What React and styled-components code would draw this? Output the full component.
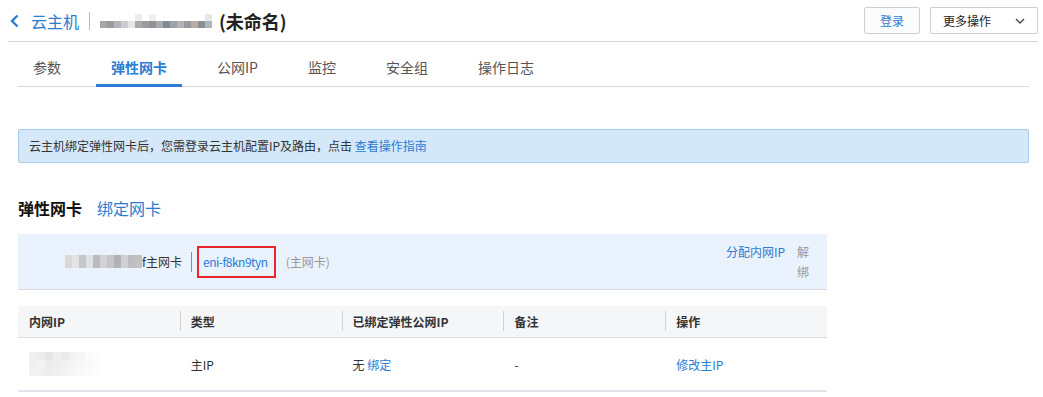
import React from 'react';
import styled, { createGlobalStyle } from 'styled-components';

const Blue = '#2b7cd3';
const Text = '#333333';

const GlobalStyle = createGlobalStyle`
  html, body {
    margin: 0;
    padding: 0;
    background: #ffffff;
  }
  body {
    font-family: 'Noto Sans CJK SC', 'Noto Sans', sans-serif;
    color: ${Text};
  }
`

const Page = styled.div`
  padding: 0 5px 0 8px;
  width: 1030px;
`

const TopBar = styled.header`
  height: 41px;
  display: flex;
  align-items: center;
  justify-content: space-between;
  border-bottom: 1px solid #d4d4d4;
`

const Crumbs = styled.div`
  display: flex;
  align-items: center;
`

const BackLink = styled.a`
  display: flex;
  align-items: center;
  gap: 12px;
  color: ${Blue};
  font-size: 16px;
  padding-left: 2px;
`

const VDivider = styled.span`
  width: 1px;
  height: ${p => p.$h || 18}px;
  background: ${p => p.$c || '#bbbbbb'};
  margin: 0 ${p => p.$m || 9}px;
`

const Title = styled.h1`
  margin: 0 0 0 7px;
  font-size: 18px;
  font-weight: bold;
  color: #222;
`

const Actions = styled.div`
  display: flex;
  gap: 10px;
`

const Button = styled.button`
  height: 27px;
  box-sizing: border-box;
  border: 1px solid #cfcfcf;
  border-radius: 2px;
  background: ${p => (p.$primary ? '#fafbfc' : '#ffffff')};
  color: ${p => (p.$primary ? Blue : '#222')};
  font-family: inherit;
  font-size: 12px;
  white-space: nowrap;
  padding: 0 ${p => (p.$primary ? 0 : 12)}px;
  width: ${p => p.$w}px;
  display: flex;
  align-items: center;
  justify-content: ${p => (p.$primary ? 'center' : 'space-between')};
`

const Content = styled.main`
  padding: 0 9px 0 10px;
`

const TabBar = styled.nav`
  display: flex;
  margin-top: 12px;
  border-bottom: 1px solid #d9d9d9;
`

const Tab = styled.a`
  box-sizing: border-box;
  height: 33px;
  line-height: 26px;
  padding: 0 15px;
  margin-right: 20px;
  margin-bottom: -1px;
  font-size: 14px;
  white-space: nowrap;
  color: ${p => (p.$active ? Blue : '#555')};
  font-weight: ${p => (p.$active ? 'bold' : 'normal')};
  border-bottom: 3px solid ${p => (p.$active ? Blue : 'transparent')};
`

const Alert = styled.div`
  margin-top: 42px;
  height: 34px;
  box-sizing: border-box;
  line-height: 32px;
  padding: 0 10px;
  background: #d5e8f9;
  border: 1px solid #a6cdee;
  border-radius: 2px;
  font-size: 12px;
  color: #333;
`

const Link = styled.a`
  color: ${Blue};
  font-size: ${p => p.$size || 'inherit'};
  letter-spacing: ${p => p.$tight ? '-0.5px' : 'normal'};
  white-space: nowrap;
  cursor: pointer;
`

const SectionHead = styled.div`
  display: flex;
  align-items: center;
  gap: 15px;
  margin-top: 33px;
  height: 24px;
`

const SectionTitle = styled.h2`
  margin: 0;
  font-size: 16px;
  font-weight: bold;
  color: #111;
`

const Card = styled.div`
  margin-top: 14px;
  width: 809px;
  height: 56px;
  box-sizing: border-box;
  background: #eaf2fd;
  border-bottom: 1px solid #d6d9de;
  display: flex;
  align-items: center;
  justify-content: space-between;
  padding-right: 17px;
  font-size: 12px;
`

const CardMain = styled.div`
  display: flex;
  align-items: center;
`

const NicName = styled.div`
  width: 164px;
  display: flex;
  justify-content: flex-end;
  align-items: center;
  color: #333;
`

const Highlight = styled.span`
  display: flex;
  align-items: center;
  height: 32px;
  box-sizing: border-box;
  padding: 0 6px 0 4px;
  border: 2px solid #e8262b;
  margin-left: -4px;
`

const Muted = styled.span`
  color: #999;
  margin-left: 10px;
`

const CardActions = styled.div`
  display: flex;
  align-items: flex-start;
  gap: 12px;
  line-height: 20px;
`

const Narrow = styled.span`
  width: 13px;
  color: #999;
  word-break: break-all;
`

const Table = styled.table`
  margin-top: 16px;
  width: 809px;
  border-collapse: collapse;
  table-layout: fixed;
  font-size: 12px;
`

const Th = styled.th`
  position: relative;
  height: 31px;
  background: #f5f6f8;
  border-bottom: 1px solid #d8dce3;
  text-align: left;
  padding: 0 0 0 11px;
  font-weight: bold;
  color: #333;
  &:not(:first-child)::before {
    content: '';
    position: absolute;
    left: 0;
    top: 5px;
    height: 20px;
    width: 1px;
    background: #d0d3d8;
  }
`

const Td = styled.td`
  height: 52px;
  padding: 0 0 0 11px;
  border-bottom: 2px solid #e1e4ea;
  color: #333;
`

const Blur = styled.span`
  display: inline-grid;
  grid-template-columns: repeat(${p => p.$cols}, ${p => p.$cw}px);
  grid-auto-rows: ${p => p.$ch}px;
  vertical-align: middle;
`

const Cell = styled.span`
  background: ${p => p.$c};
`

const PixelBlur = ({ colors, cols, cw, ch }) => (
  <Blur $cols={cols} $cw={cw} $ch={ch}>
    {colors.map((c, i) => (
      <Cell key={i} $c={c} />
    ))}
  </Blur>
);

const nameColors = [
  '#ffffff', '#ffffff', '#ffffff', '#ffffff', '#ffffff', '#eeeeee', '#ffffff', '#f0f0f0', '#ffffff', '#ffffff', '#ffffff', '#ffffff', '#ffffff', '#ffffff', '#ffffff', '#e8e8e8',
  '#a7a5a8', '#9a9aa0', '#b3b5b8', '#c6ccd0', '#e6e6e6', '#a8a8ac', '#9c9c9f', '#8f9397', '#a7abad', '#858a90', '#a0a4a8', '#b1b3b6', '#979b9e', '#b8aca8', '#8e8f92', '#b0b5b9',
];

const nicColors = [
  '#d8d8d8', '#e4e4e4', '#c4c8cc', '#e0e0e0', '#b8bcc0', '#d2d2d2', '#c6c6c8', '#b0b2b4', '#cfd0d2', '#bcbec0', '#c0c2c4',
];

const ipColors = [
  '#f0f0f0', '#ececec', '#e6e6e6', '#efefef', '#eaeaea', '#f2f2f2', '#f6f6f6', '#fbfbfb', '#fdfdfd',
  '#efefef', '#f3f3f3', '#ebebeb', '#eeeeee', '#f1f1f1', '#f4f4f4', '#f7f7f7', '#fafafa', '#fcfcfc',
  '#f2f2f2', '#f1f1f1', '#ededed', '#f0f0f0', '#f3f3f3', '#f6f6f6', '#f9f9f9', '#fbfbfb', '#fdfdfd',
];

const tabs = ['参数', '弹性网卡', '公网IP', '监控', '安全组', '操作日志'];

const columns = ['内网IP', '类型', '已绑定弹性公网IP', '备注', '操作'];

const ChevronLeft = () => (
  <svg width="9" height="14" viewBox="0 0 9 14">
    <polyline points="7.5,1.5 2,7 7.5,12.5" fill="none" stroke={Blue} strokeWidth="2.4" />
  </svg>
);

const ChevronDown = () => (
  <svg width="10" height="6" viewBox="0 0 10 6">
    <polyline points="1,1 5,5 9,1" fill="none" stroke="#444" strokeWidth="1.3" />
  </svg>
);

export default function App() {
  return (
    <>
      <GlobalStyle />
      <Page>
        <TopBar>
          <Crumbs>
            <BackLink>
              <ChevronLeft />
              云主机
            </BackLink>
            <VDivider $h={18} $m={10} />
            <PixelBlur colors={nameColors} cols={16} cw={7} ch={7} />
            <Title>(未命名)</Title>
          </Crumbs>
          <Actions>
            <Button $primary $w={56}>登录</Button>
            <Button $w={108}>
              更多操作
              <ChevronDown />
            </Button>
          </Actions>
        </TopBar>

        <Content>
          <TabBar>
            {tabs.map(t => (
              <Tab key={t} $active={t === '弹性网卡'}>{t}</Tab>
            ))}
          </TabBar>

          <Alert>
            云主机绑定弹性网卡后，您需登录云主机配置IP及路由，点击 <Link>查看操作指南</Link>
          </Alert>

          <SectionHead>
            <SectionTitle>弹性网卡</SectionTitle>
            <Link $size="16px">绑定网卡</Link>
          </SectionHead>

          <Card>
            <CardMain>
              <NicName>
                <PixelBlur colors={nicColors} cols={11} cw={7} ch={13} />
                f主网卡
              </NicName>
              <VDivider $h={20} $m={9} $c="#8c8c8c" />
              <Highlight>
                <Link $tight>eni-f8kn9tyn</Link>
              </Highlight>
              <Muted>(主网卡)</Muted>
            </CardMain>
            <CardActions>
              <Link>分配内网IP</Link>
              <Narrow>解绑</Narrow>
            </CardActions>
          </Card>

          <Table>
            <thead>
              <tr>
                {columns.map(c => (
                  <Th key={c}>{c}</Th>
                ))}
              </tr>
            </thead>
            <tbody>
              <tr>
                <Td>
                  <PixelBlur colors={ipColors} cols={9} cw={8} ch={8} />
                </Td>
                <Td>主IP</Td>
                <Td>
                  无 <Link>绑定</Link>
                </Td>
                <Td>-</Td>
                <Td>
                  <Link>修改主IP</Link>
                </Td>
              </tr>
            </tbody>
          </Table>
        </Content>
      </Page>
    </>
  );
}
